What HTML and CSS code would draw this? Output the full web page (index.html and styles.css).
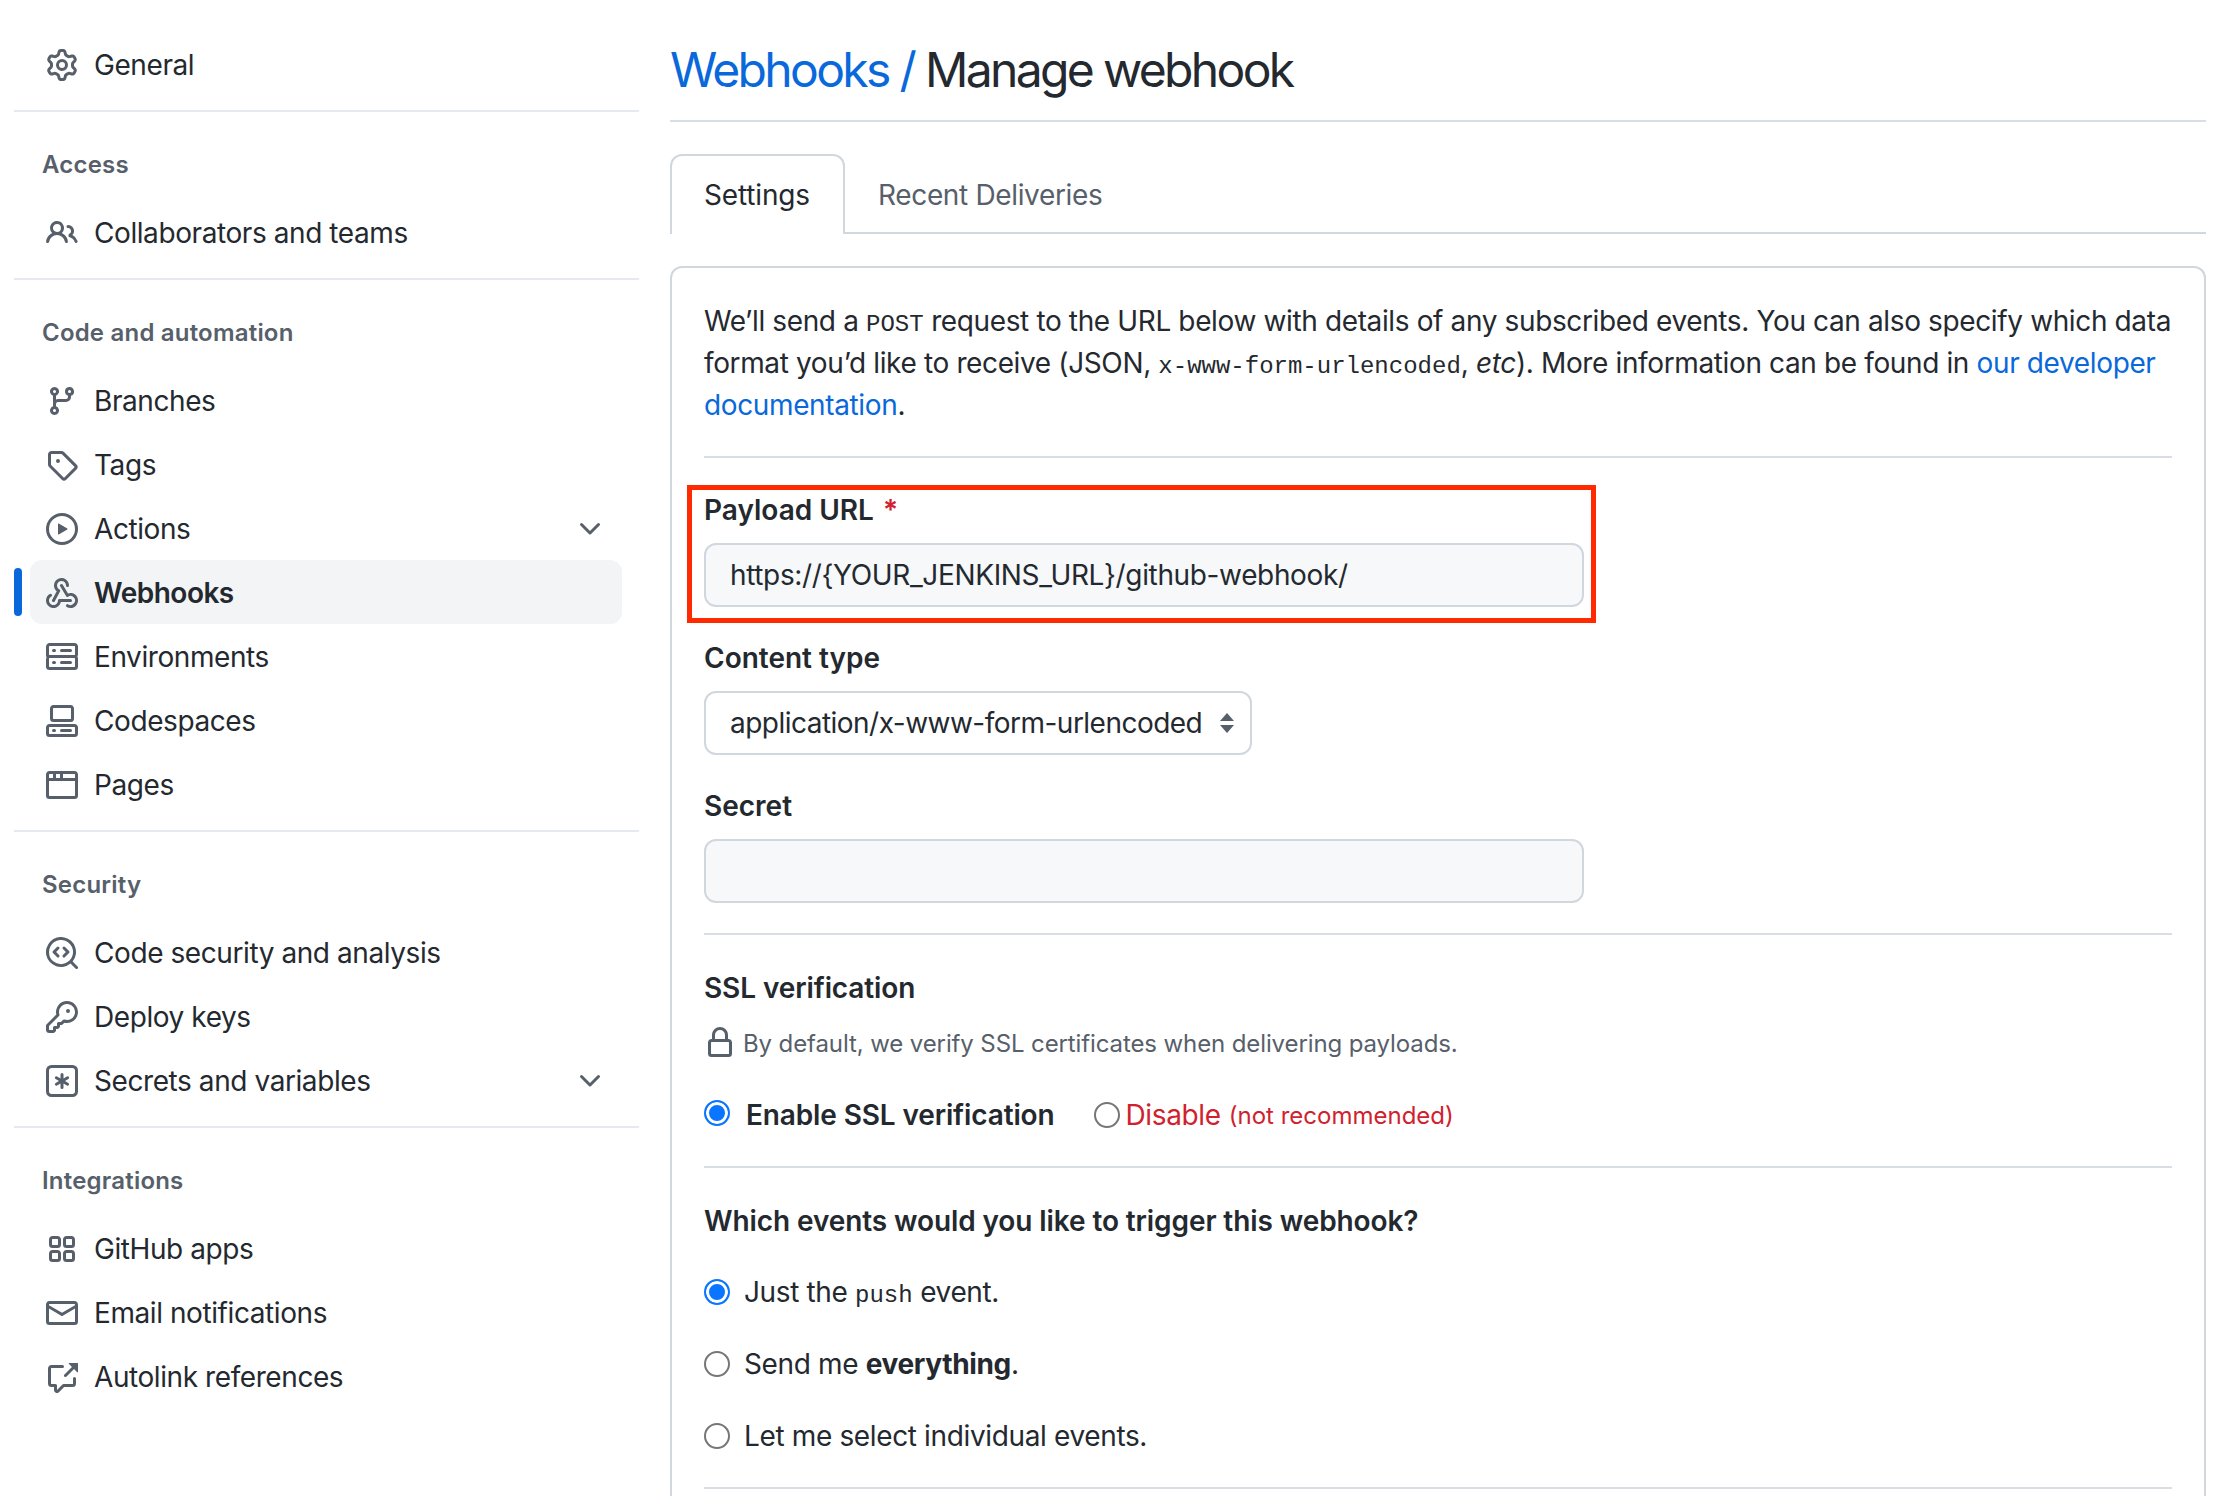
FILE: index.html
```html
<!DOCTYPE html>
<html lang="en">

<head>
    <meta charset="UTF-8">
    <title>Webhooks / Manage webhook</title>
    <link rel="stylesheet" href="styles.css">
</head>

<body>
    <svg class="sprite" xmlns="http://www.w3.org/2000/svg">
        <symbol id="i-gear" viewBox="0 0 16 16"><path d="M8 0a8.2 8.2 0 0 1 .701.031C9.444.095 9.99.645 10.16 1.29l.288 1.107c.018.066.079.158.212.224.231.114.454.243.668.386.123.082.233.09.299.071l1.103-.303c.644-.176 1.392.021 1.82.63.27.385.506.792.704 1.218.315.675.111 1.422-.364 1.891l-.814.806c-.049.048-.098.147-.088.294.016.257.016.515 0 .772-.01.147.038.246.088.294l.814.806c.475.469.679 1.216.364 1.891a7.977 7.977 0 0 1-.704 1.217c-.428.61-1.176.807-1.82.63l-1.102-.302c-.067-.019-.177-.011-.3.071a5.909 5.909 0 0 1-.668.386c-.133.066-.194.158-.211.224l-.29 1.106c-.168.646-.715 1.196-1.458 1.26a8.006 8.006 0 0 1-1.402 0c-.743-.064-1.289-.614-1.458-1.26l-.289-1.106c-.018-.066-.079-.158-.212-.224a5.738 5.738 0 0 1-.668-.386c-.123-.082-.233-.09-.299-.071l-1.103.303c-.644.176-1.392-.021-1.82-.63a8.12 8.12 0 0 1-.704-1.218c-.315-.675-.111-1.422.363-1.891l.815-.806c.05-.048.098-.147.088-.294a6.214 6.214 0 0 1 0-.772c.01-.147-.038-.246-.088-.294l-.815-.806C.635 6.045.431 5.298.746 4.623a7.92 7.92 0 0 1 .704-1.217c.428-.61 1.176-.807 1.82-.63l1.102.302c.067.019.177.011.3-.071.214-.143.437-.272.668-.386.133-.066.194-.158.211-.224l.29-1.106C6.009.645 6.556.095 7.299.03 7.53.01 7.764 0 8 0Zm-.571 1.525c-.036.003-.108.036-.137.146l-.289 1.105c-.147.561-.549.967-.998 1.189-.173.086-.34.183-.5.29-.417.278-.97.423-1.529.27l-1.103-.303c-.109-.03-.175.016-.195.045-.22.312-.412.644-.573.99-.014.031-.021.11.059.19l.815.806c.411.406.562.957.53 1.456a4.709 4.709 0 0 0 0 .582c.032.499-.119 1.05-.53 1.456l-.815.806c-.081.08-.073.159-.059.19.162.346.353.677.573.989.02.03.085.076.195.046l1.102-.303c.56-.153 1.113-.008 1.53.27.161.107.328.204.501.29.447.222.85.629.997 1.189l.289 1.105c.029.109.101.143.137.146a6.6 6.6 0 0 0 1.142 0c.036-.003.108-.036.137-.146l.289-1.105c.147-.561.549-.967.998-1.189.173-.086.34-.183.5-.29.417-.278.97-.423 1.529-.27l1.103.303c.109.029.175-.016.195-.045.22-.313.411-.644.573-.99.014-.031.021-.11-.059-.19l-.815-.806c-.411-.406-.562-.957-.53-1.456a4.709 4.709 0 0 0 0-.582c-.032-.499.119-1.05.53-1.456l.815-.806c.081-.08.073-.159.059-.19a6.464 6.464 0 0 0-.573-.989c-.02-.03-.085-.076-.195-.046l-1.102.303c-.56.153-1.113.008-1.53-.27a4.44 4.44 0 0 0-.501-.29c-.447-.222-.85-.629-.997-1.189l-.289-1.105c-.029-.11-.101-.143-.137-.146a6.6 6.6 0 0 0-1.142 0ZM11 8a3 3 0 1 1-6 0 3 3 0 0 1 6 0ZM9.5 8a1.5 1.5 0 1 0-3.001.001A1.5 1.5 0 0 0 9.5 8Z"/></symbol>
        <symbol id="i-people" viewBox="0 0 16 16"><path d="M2 5.5a3.5 3.5 0 1 1 5.898 2.549 5.508 5.508 0 0 1 3.034 4.084.75.75 0 1 1-1.482.235 4 4 0 0 0-7.9 0 .75.75 0 0 1-1.482-.236A5.507 5.507 0 0 1 3.102 8.05 3.493 3.493 0 0 1 2 5.5ZM11 4a3.001 3.001 0 0 1 2.22 5.018 5.01 5.01 0 0 1 2.56 3.012.749.749 0 0 1-.885.954.752.752 0 0 1-.549-.514 3.507 3.507 0 0 0-2.522-2.372.75.75 0 0 1-.574-.73v-.352a.75.75 0 0 1 .416-.672A1.5 1.5 0 0 0 11 5.5.75.75 0 0 1 11 4Zm-5.5-.5a2 2 0 1 0-.001 3.999A2 2 0 0 0 5.5 3.5Z"/></symbol>
        <symbol id="i-branch" viewBox="0 0 16 16"><path d="M9.5 3.25a2.25 2.25 0 1 1 3 2.122V6A2.5 2.5 0 0 1 10 8.5H6a1 1 0 0 0-1 1v1.128a2.251 2.251 0 1 1-1.5 0V5.372a2.25 2.25 0 1 1 1.5 0v1.836A2.493 2.493 0 0 1 6 7h4a1 1 0 0 0 1-1v-.628A2.25 2.25 0 0 1 9.5 3.25Zm-6 0a.75.75 0 1 0 1.5 0 .75.75 0 0 0-1.5 0Zm8.25-.75a.75.75 0 1 0 0 1.5.75.75 0 0 0 0-1.5ZM4.25 12a.75.75 0 1 0 0 1.5.75.75 0 0 0 0-1.5Z"/></symbol>
        <symbol id="i-tag" viewBox="0 0 16 16"><path d="M1 7.775V2.75C1 1.784 1.784 1 2.75 1h5.025c.464 0 .91.184 1.238.513l6.25 6.25a1.75 1.75 0 0 1 0 2.474l-5.026 5.026a1.75 1.75 0 0 1-2.474 0l-6.25-6.25A1.752 1.752 0 0 1 1 7.775Zm1.5 0c0 .066.026.13.073.177l6.25 6.25a.25.25 0 0 0 .354 0l5.025-5.025a.25.25 0 0 0 0-.354l-6.25-6.25a.25.25 0 0 0-.177-.073H2.75a.25.25 0 0 0-.25.25ZM6 5a1 1 0 1 1 0 2 1 1 0 0 1 0-2Z"/></symbol>
        <symbol id="i-play" viewBox="0 0 16 16"><path d="M8 0a8 8 0 1 1 0 16A8 8 0 0 1 8 0ZM1.5 8a6.5 6.5 0 1 0 13 0 6.5 6.5 0 0 0-13 0Zm4.879-2.773 4.264 2.559a.25.25 0 0 1 0 .428l-4.264 2.559A.25.25 0 0 1 6 10.559V5.442a.25.25 0 0 1 .379-.215Z"/></symbol>
        <symbol id="i-webhook" viewBox="0 0 16 16"><path d="M5.5 4.25a2.25 2.25 0 0 1 4.5 0 .75.75 0 0 0 1.5 0 3.75 3.75 0 1 0-6.14 2.889l-2.272 4.258a.75.75 0 0 0 1.324.706L7 7.25a.75.75 0 0 0-.309-1.015A2.25 2.25 0 0 1 5.5 4.25Z"/><path d="M7.364 3.607a.75.75 0 0 1 1.03.257l2.608 4.349a3.75 3.75 0 1 1-.628 6.785.75.75 0 0 1 .752-1.299 2.25 2.25 0 1 0-.033-3.88.75.75 0 0 1-1.03-.256L7.107 4.636a.75.75 0 0 1 .257-1.03Z"/><path d="M2.9 8.776A.75.75 0 0 1 2.625 9.8 2.25 2.25 0 1 0 6 11.75a.75.75 0 0 1 .75-.751h5.5a.75.75 0 0 1 0 1.5H7.425a3.751 3.751 0 1 1-5.55-3.998.75.75 0 0 1 1.024.274Z"/></symbol>
        <symbol id="i-server" viewBox="0 0 16 16"><path d="M1.75 1h12.5c.966 0 1.75.784 1.75 1.75v4c0 .372-.116.717-.314 1 .198.283.314.628.314 1v4a1.75 1.75 0 0 1-1.75 1.75H1.75A1.75 1.75 0 0 1 0 13.25v-4c0-.372.116-.717.314-1a1.739 1.739 0 0 1-.314-1v-4C0 1.784.784 1 1.75 1ZM1.5 2.75v4c0 .138.112.25.25.25h12.5a.25.25 0 0 0 .25-.25v-4a.25.25 0 0 0-.25-.25H1.75a.25.25 0 0 0-.25.25Zm.25 5.75a.25.25 0 0 0-.25.25v4c0 .138.112.25.25.25h12.5a.25.25 0 0 0 .25-.25v-4a.25.25 0 0 0-.25-.25ZM7 4.75A.75.75 0 0 1 7.75 4h4.5a.75.75 0 0 1 0 1.5h-4.5A.75.75 0 0 1 7 4.75ZM7.75 10h4.5a.75.75 0 0 1 0 1.5h-4.5a.75.75 0 0 1 0-1.5ZM3 4.75A.75.75 0 0 1 3.75 4h.5a.75.75 0 0 1 0 1.5h-.5A.75.75 0 0 1 3 4.75ZM3.75 10h.5a.75.75 0 0 1 0 1.5h-.5a.75.75 0 0 1 0-1.5Z"/></symbol>
        <symbol id="i-codespaces" viewBox="0 0 16 16"><path d="M0 11.25c0-.966.784-1.75 1.75-1.75h12.5c.966 0 1.75.784 1.75 1.75v3A1.75 1.75 0 0 1 14.25 16H1.75A1.75 1.75 0 0 1 0 14.25Zm2-9.5C2 .784 2.784 0 3.75 0h8.5C13.216 0 14 .784 14 1.75v5a1.75 1.75 0 0 1-1.75 1.75h-8.5A1.75 1.75 0 0 1 2 6.75Zm1.75-.25a.25.25 0 0 0-.25.25v5c0 .138.112.25.25.25h8.5a.25.25 0 0 0 .25-.25v-5a.25.25 0 0 0-.25-.25Zm-2 9.5a.25.25 0 0 0-.25.25v3c0 .138.112.25.25.25h12.5a.25.25 0 0 0 .25-.25v-3a.25.25 0 0 0-.25-.25Z"/><path d="M7 12.75a.75.75 0 0 1 .75-.75h4.5a.75.75 0 0 1 0 1.5h-4.5a.75.75 0 0 1-.75-.75Zm-4 0a.75.75 0 0 1 .75-.75h.5a.75.75 0 0 1 0 1.5h-.5a.75.75 0 0 1-.75-.75Z"/></symbol>
        <symbol id="i-browser" viewBox="0 0 16 16"><path d="M0 2.75C0 1.784.784 1 1.75 1h12.5c.966 0 1.75.784 1.75 1.75v10.5A1.75 1.75 0 0 1 14.25 15H1.75A1.75 1.75 0 0 1 0 13.25ZM14.5 6h-13v7.25c0 .138.112.25.25.25h12.5a.25.25 0 0 0 .25-.25Zm-6-3.5v2h6V2.75a.25.25 0 0 0-.25-.25ZM5 2.5v2h2v-2Zm-3.25 0a.25.25 0 0 0-.25.25V4.5h2v-2Z"/></symbol>
        <symbol id="i-codescan" viewBox="0 0 16 16"><path d="M8.47 4.97a.75.75 0 0 0 0 1.06L9.94 7.5 8.47 8.97a.75.75 0 1 0 1.06 1.06l2-2a.75.75 0 0 0 0-1.06l-2-2a.75.75 0 0 0-1.06 0ZM6.53 6.03a.75.75 0 0 0-1.06-1.06l-2 2a.75.75 0 0 0 0 1.06l2 2a.75.75 0 1 0 1.06-1.06L5.06 7.5l1.47-1.47Z"/><path d="M12.246 13.307a7.501 7.501 0 1 1 1.06-1.06l2.474 2.473a.749.749 0 0 1-.326 1.275.749.749 0 0 1-.734-.215ZM1.5 7.5a6.002 6.002 0 0 0 3.608 5.504 6.002 6.002 0 0 0 6.486-1.117.748.748 0 0 1 .292-.293A6 6 0 1 0 1.5 7.5Z"/></symbol>
        <symbol id="i-key" viewBox="0 0 16 16"><path d="M10.5 0a5.499 5.499 0 1 1-1.288 10.848l-.932.932a.749.749 0 0 1-.53.22H7v.75a.749.749 0 0 1-.22.53l-.5.5a.749.749 0 0 1-.53.22H5v.75a.749.749 0 0 1-.22.53l-.5.5a.749.749 0 0 1-.53.22h-2A1.75 1.75 0 0 1 0 14.25v-2c0-.199.079-.389.22-.53l4.932-4.932A5.5 5.5 0 0 1 10.5 0Zm-4 5.5c-.001.431.069.86.205 1.269a.75.75 0 0 1-.181.768L1.5 12.56v1.69c0 .138.112.25.25.25h1.69l.06-.06v-1.19a.75.75 0 0 1 .75-.75h1.19l.06-.06v-1.19a.75.75 0 0 1 .75-.75h1.19l1.023-1.025a.75.75 0 0 1 .768-.18A4 4 0 1 0 6.5 5.5ZM11 6a1 1 0 1 1 0-2 1 1 0 0 1 0 2Z"/></symbol>
        <symbol id="i-asterisk" viewBox="0 0 16 16"><path d="M0 2.75A2.75 2.75 0 0 1 2.75 0h10.5A2.75 2.75 0 0 1 16 2.75v10.5A2.75 2.75 0 0 1 13.25 16H2.75A2.75 2.75 0 0 1 0 13.25ZM2.75 1.5c-.69 0-1.25.56-1.25 1.25v10.5c0 .69.56 1.25 1.25 1.25h10.5c.69 0 1.25-.56 1.25-1.25V2.75c0-.69-.56-1.25-1.25-1.25Z"/><path d="M8 4a.75.75 0 0 1 .75.75V6.7l1.69-.975a.75.75 0 0 1 .75 1.3L9.5 8l1.69.976a.75.75 0 0 1-.75 1.298L8.75 9.3v1.951a.75.75 0 0 1-1.5 0V9.299l-1.69.976a.75.75 0 0 1-.75-1.3L6.5 8l-1.69-.975a.75.75 0 0 1 .75-1.3l1.69.976V4.75A.75.75 0 0 1 8 4Z"/></symbol>
        <symbol id="i-apps" viewBox="0 0 16 16"><path d="M1.5 3.25c0-.966.784-1.75 1.75-1.75h2.5c.966 0 1.75.784 1.75 1.75v2.5A1.75 1.75 0 0 1 5.75 7.5h-2.5A1.75 1.75 0 0 1 1.5 5.75Zm7 0c0-.966.784-1.75 1.75-1.75h2.5c.966 0 1.75.784 1.75 1.75v2.5a1.75 1.75 0 0 1-1.75 1.75h-2.5A1.75 1.75 0 0 1 8.5 5.75Zm-7 7c0-.966.784-1.75 1.75-1.75h2.5c.966 0 1.75.784 1.75 1.75v2.5a1.75 1.75 0 0 1-1.75 1.75h-2.5a1.75 1.75 0 0 1-1.75-1.75Zm7 0c0-.966.784-1.75 1.75-1.75h2.5c.966 0 1.75.784 1.75 1.75v2.5a1.75 1.75 0 0 1-1.75 1.75h-2.5a1.75 1.75 0 0 1-1.75-1.75ZM3.25 3a.25.25 0 0 0-.25.25v2.5c0 .138.112.25.25.25h2.5A.25.25 0 0 0 6 5.75v-2.5A.25.25 0 0 0 5.75 3Zm7 0a.25.25 0 0 0-.25.25v2.5c0 .138.112.25.25.25h2.5a.25.25 0 0 0 .25-.25v-2.5a.25.25 0 0 0-.25-.25Zm-7 7a.25.25 0 0 0-.25.25v2.5c0 .138.112.25.25.25h2.5a.25.25 0 0 0 .25-.25v-2.5a.25.25 0 0 0-.25-.25Zm7 0a.25.25 0 0 0-.25.25v2.5c0 .138.112.25.25.25h2.5a.25.25 0 0 0 .25-.25v-2.5a.25.25 0 0 0-.25-.25Z"/></symbol>
        <symbol id="i-mail" viewBox="0 0 16 16"><path d="M1.75 2h12.5c.966 0 1.75.784 1.75 1.75v8.5A1.75 1.75 0 0 1 14.25 14H1.75A1.75 1.75 0 0 1 0 12.25v-8.5C0 2.784.784 2 1.75 2ZM1.5 12.251c0 .138.112.25.25.25h12.5a.25.25 0 0 0 .25-.25V5.809L8.38 9.397a.75.75 0 0 1-.76 0L1.5 5.809v6.442Zm13-8.181v-.32a.25.25 0 0 0-.25-.25H1.75a.25.25 0 0 0-.25.25v.32L8 7.88Z"/></symbol>
        <symbol id="i-crossref" viewBox="0 0 16 16"><path d="M2.75 3.5a.25.25 0 0 0-.25.25v7.5c0 .138.112.25.25.25h2a.75.75 0 0 1 .75.75v2.19l2.72-2.72a.749.749 0 0 1 .53-.22h4.5a.25.25 0 0 0 .25-.25v-2.5a.75.75 0 0 1 1.5 0v2.5A1.75 1.75 0 0 1 13.25 13H9.06l-2.573 2.573A1.458 1.458 0 0 1 4 14.543V13H2.75A1.75 1.75 0 0 1 1 11.25v-7.5C1 2.784 1.784 2 2.75 2h5.5a.75.75 0 0 1 0 1.5ZM16 1.25v4.146a.25.25 0 0 1-.427.177L14.03 4.03l-3.75 3.75a.749.749 0 0 1-1.275-.326.749.749 0 0 1 .215-.734l3.75-3.75-1.543-1.543A.25.25 0 0 1 11.604 1h4.146a.25.25 0 0 1 .25.25Z"/></symbol>
        <symbol id="i-chevron" viewBox="0 0 16 16"><path d="M12.78 5.22a.749.749 0 0 1 0 1.06l-4.25 4.25a.749.749 0 0 1-1.06 0L3.22 6.28a.749.749 0 1 1 1.06-1.06L8 8.939l3.72-3.719a.749.749 0 0 1 1.06 0Z"/></symbol>
        <symbol id="i-lock" viewBox="0 0 16 16"><path d="M4 4a4 4 0 0 1 8 0v2h.25c.966 0 1.75.784 1.75 1.75v5.5A1.75 1.75 0 0 1 12.25 15h-8.5A1.75 1.75 0 0 1 2 13.25v-5.5C2 6.784 2.784 6 3.75 6H4Zm8.25 3.5h-8.5a.25.25 0 0 0-.25.25v5.5c0 .138.112.25.25.25h8.5a.25.25 0 0 0 .25-.25v-5.5a.25.25 0 0 0-.25-.25ZM10.5 6V4a2.5 2.5 0 1 0-5 0v2Z"/></symbol>
    </svg>

    <nav class="sidebar">
        <ul class="nav-group">
            <li class="nav-item"><svg class="icon"><use href="#i-gear"/></svg>General</li>
        </ul>
        <div class="nav-section">
            <h3 class="nav-heading">Access</h3>
            <ul class="nav-group">
                <li class="nav-item"><svg class="icon"><use href="#i-people"/></svg>Collaborators and teams</li>
            </ul>
        </div>
        <div class="nav-section">
            <h3 class="nav-heading">Code and automation</h3>
            <ul class="nav-group">
                <li class="nav-item"><svg class="icon"><use href="#i-branch"/></svg>Branches</li>
                <li class="nav-item"><svg class="icon"><use href="#i-tag"/></svg>Tags</li>
                <li class="nav-item"><svg class="icon"><use href="#i-play"/></svg>Actions<svg class="chevron"><use href="#i-chevron"/></svg></li>
                <li class="nav-item active"><svg class="icon"><use href="#i-webhook"/></svg>Webhooks</li>
                <li class="nav-item"><svg class="icon"><use href="#i-server"/></svg>Environments</li>
                <li class="nav-item"><svg class="icon"><use href="#i-codespaces"/></svg>Codespaces</li>
                <li class="nav-item"><svg class="icon"><use href="#i-browser"/></svg>Pages</li>
            </ul>
        </div>
        <div class="nav-section">
            <h3 class="nav-heading">Security</h3>
            <ul class="nav-group">
                <li class="nav-item"><svg class="icon"><use href="#i-codescan"/></svg>Code security and analysis</li>
                <li class="nav-item"><svg class="icon"><use href="#i-key"/></svg>Deploy keys</li>
                <li class="nav-item"><svg class="icon"><use href="#i-asterisk"/></svg>Secrets and variables<svg class="chevron"><use href="#i-chevron"/></svg></li>
            </ul>
        </div>
        <div class="nav-section">
            <h3 class="nav-heading">Integrations</h3>
            <ul class="nav-group">
                <li class="nav-item"><svg class="icon"><use href="#i-apps"/></svg>GitHub apps</li>
                <li class="nav-item"><svg class="icon"><use href="#i-mail"/></svg>Email notifications</li>
                <li class="nav-item"><svg class="icon"><use href="#i-crossref"/></svg>Autolink references</li>
            </ul>
        </div>
    </nav>

    <main class="content">
        <h1 class="page-title"><a href="#">Webhooks /</a> Manage webhook</h1>

        <div class="tabs">
            <a class="tab selected" href="#">Settings</a>
            <a class="tab" href="#">Recent Deliveries</a>
        </div>

        <form class="panel">
            <p class="intro">We&rsquo;ll send a <code>POST</code> request to the URL below with details of any subscribed events. You can also specify which data format you&rsquo;d like to receive (JSON, <code>x-www-form-urlencoded</code>, <em>etc</em>). More information can be found in <a href="#">our developer documentation</a>.</p>
            <hr class="rule">

            <div class="field highlighted">
                <span class="annotation"></span>
                <label for="payloadUrl">Payload URL <span class="required">*</span></label>
                <input class="text-input" id="payloadUrl" type="text" value="https://{YOUR_JENKINS_URL}/github-webhook/">
            </div>

            <div class="field">
                <label for="contentType">Content type</label>
                <div class="select-box">
                    <span id="contentType">application/x-www-form-urlencoded</span>
                    <span class="carets"><i class="caret-up"></i><i class="caret-down"></i></span>
                </div>
            </div>

            <div class="field">
                <label for="secret">Secret</label>
                <input class="text-input" id="secret" type="text">
            </div>
            <hr class="rule after-field">

            <h4 class="group-title">SSL verification</h4>
            <p class="note"><svg class="lock"><use href="#i-lock"/></svg>By default, we verify SSL certificates when delivering payloads.</p>
            <div class="ssl-options">
                <label class="radio bold enable"><input type="radio" name="ssl" checked>Enable SSL verification</label>
                <label class="radio danger"><input type="radio" name="ssl">Disable <small>(not recommended)</small></label>
            </div>
            <hr class="rule after-ssl">

            <h4 class="group-title">Which events would you like to trigger this webhook?</h4>
            <div class="events">
                <label class="radio"><input type="radio" name="events" checked><span>Just the <code>push</code> event.</span></label>
                <label class="radio"><input type="radio" name="events"><span>Send me <strong>everything</strong>.</span></label>
                <label class="radio"><input type="radio" name="events"><span>Let me select individual events.</span></label>
            </div>
            <hr class="rule after-events">
        </form>
    </main>
</body>

</html>
```

FILE: styles.css
```css
* {
    box-sizing: border-box;
}

html, body {
    height: 100%;
    overflow: hidden;
}

body {
    display: flex;
    margin: 0;
    font-family: Inter, "Noto Sans", sans-serif;
    font-size: 28px;
    letter-spacing: -0.36px;
    color: #24292f;
    background-color: #fff;
}

.sprite {
    display: none;
}

a {
    color: #0969da;
    text-decoration: none;
}

code {
    font-family: "Liberation Mono", monospace;
    font-size: 24px;
    line-height: 1;
    letter-spacing: 0;
}

/* sidebar */
.sidebar {
    flex: 0 0 625px;
    margin-left: 14px;
    padding-top: 32px;
}

.nav-group {
    list-style: none;
    margin: 0;
    padding: 0;
}

.nav-section {
    margin-top: 14px;
    padding-top: 32px;
    border-top: 2px solid #e6e9ed;
}

.nav-heading {
    height: 40px;
    margin: 0 0 16px;
    padding-top: 1px;
    padding-left: 28px;
    font-size: 24px;
    font-weight: 600;
    line-height: 40px;
    letter-spacing: 0.2px;
    color: #57606a;
}

.nav-item {
    position: relative;
    display: flex;
    align-items: center;
    width: 592px;
    height: 64px;
    margin-left: 16px;
    padding-left: 16px;
    padding-top: 1px;
    border-radius: 12px;
    letter-spacing: -0.42px;
}

.nav-item.active {
    font-weight: 600;
    letter-spacing: -0.5px;
    background-color: #f3f4f6;
}

.nav-item.active::before {
    content: "";
    position: absolute;
    left: -16px;
    top: 8px;
    width: 8px;
    height: 48px;
    border-radius: 4px;
    background-color: #0969da;
}

.icon {
    flex: none;
    width: 32px;
    height: 32px;
    margin-right: 16px;
    fill: #57606a;
}

.chevron {
    width: 32px;
    height: 32px;
    margin-left: auto;
    margin-right: 16px;
    fill: #57606a;
}

/* main column */
.content {
    display: flex;
    flex: 1;
    flex-direction: column;
    height: 100%;
    margin-left: 31px;
    margin-right: 18px;
}

.page-title {
    height: 122px;
    margin: 0;
    padding-top: 38px;
    font-size: 48px;
    font-weight: 400;
    line-height: 64px;
    letter-spacing: -2.65px;
    border-bottom: 2px solid #d8dee4;
}

.tabs {
    display: flex;
    height: 112px;
    padding-top: 32px;
    border-bottom: 2px solid #d0d7de;
}

.tab {
    height: 80px;
    padding: 2px 32px 0 33px;
    line-height: 78px;
    color: #57606a;
    letter-spacing: -0.35px;
}

.tab.selected {
    padding: 0 33px 0 32px;
    margin-bottom: -2px;
    letter-spacing: -0.15px;
    color: #24292f;
    background-color: #fff;
    border: 2px solid #d0d7de;
    border-bottom: none;
    border-radius: 12px 12px 0 0;
}

.panel {
    flex: 1;
    margin-top: 32px;
    padding: 32px 32px 0;
    border: 2px solid #d0d7de;
    border-bottom: none;
    border-radius: 12px 12px 0 0;
}

.intro {
    margin: 0;
    line-height: 42px;
    letter-spacing: -0.37px;
}

.rule {
    height: 2px;
    margin: 30px 0 0;
    border: none;
    background-color: #d8dee4;
}

.field {
    position: relative;
    margin-top: 31px;
}

.field label {
    display: block;
    height: 40px;
    margin-bottom: 13px;
    font-weight: 600;
    line-height: 40px;
    letter-spacing: 0;
}

.highlighted {
    width: 880px;
    margin-top: 32px;
}

.annotation {
    position: absolute;
    top: -5px;
    left: -17px;
    width: 909px;
    height: 138px;
    border: 5px solid #ff2a00;
}

.required {
    margin-left: 2px;
    color: #cf222e;
}

.text-input {
    display: block;
    width: 880px;
    height: 64px;
    padding: 0 24px;
    font: inherit;
    letter-spacing: inherit;
    color: #24292f;
    background-color: #f6f8fa;
    border: 2px solid #d0d7de;
    border-radius: 12px;
    outline: none;
}

.select-box {
    display: flex;
    align-items: center;
    justify-content: space-between;
    width: 548px;
    height: 64px;
    padding: 0 16px 0 24px;
    letter-spacing: -0.52px;
    border: 2px solid #d0d7de;
    border-radius: 12px;
}

.carets {
    display: flex;
    flex-direction: column;
    gap: 4px;
}

.carets i {
    width: 0;
    height: 0;
    border-left: 7px solid transparent;
    border-right: 7px solid transparent;
}

.caret-up {
    border-bottom: 8px solid #57606a;
}

.caret-down {
    border-top: 8px solid #57606a;
}

.group-title {
    height: 40px;
    margin: 33px 0 0;
    font-size: 28px;
    font-weight: 600;
    line-height: 40px;
    letter-spacing: -0.1px;
}

.note {
    display: flex;
    align-items: center;
    height: 36px;
    margin: 17px 0 0;
    font-size: 24px;
    letter-spacing: -0.11px;
    color: #57606a;
}

.lock {
    width: 32px;
    height: 32px;
    margin-right: 7px;
    fill: #57606a;
}

.radio {
    display: flex;
    align-items: center;
    gap: 14px;
}

.radio input {
    flex: none;
    width: 26px;
    height: 26px;
    margin: 0;
    appearance: none;
    border: 2px solid #767676;
    border-radius: 50%;
    background-color: #fff;
}

.radio input:checked {
    border-color: #0a75ff;
    background-color: #0a75ff;
    box-shadow: inset 0 0 0 3px #fff;
}

.ssl-options {
    display: flex;
    align-items: center;
    height: 46px;
    margin-top: 31px;
}

.bold {
    font-weight: 600;
    letter-spacing: -0.13px;
}

.enable {
    gap: 16px;
    margin-right: 39px;
}

.enable input {
    margin-bottom: 4px;
}

.danger {
    gap: 6px;
    color: #cf222e;
}

.danger small {
    margin-left: 2px;
    font-size: 24px;
    letter-spacing: 0;
}

.after-ssl {
    margin-top: 28px;
}

.events {
    display: flex;
    flex-direction: column;
    margin-top: 15px;
}

.events .radio {
    height: 72px;
}

.after-events {
    margin-top: 15px;
}
```
